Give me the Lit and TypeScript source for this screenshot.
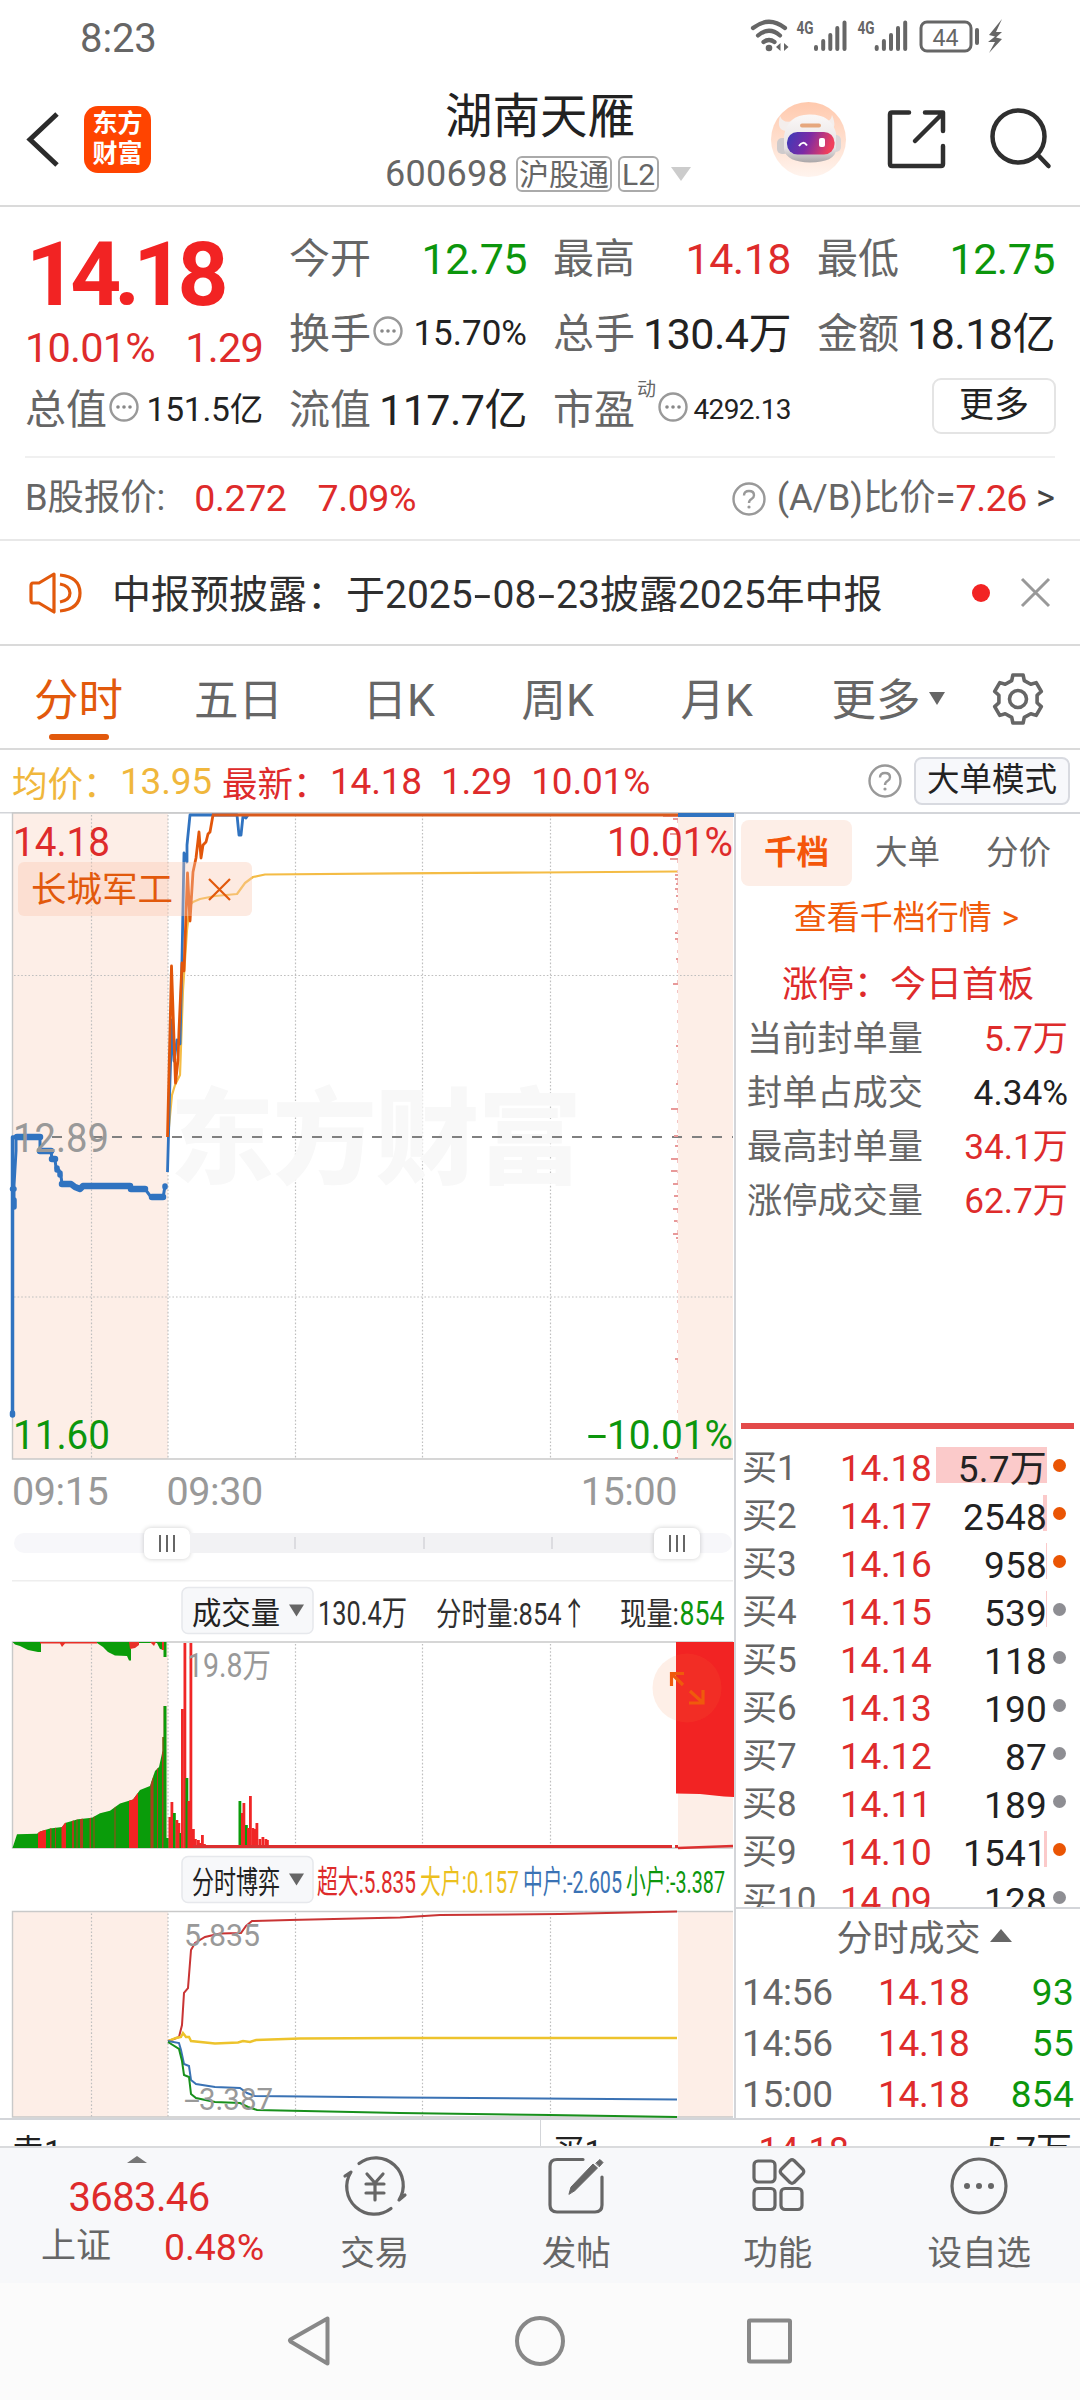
import { LitElement, html, svg, css } from "lit";
import { customElement } from "lit/decorators.js";

const RED = "#de2b2b";
const GREEN = "#0c960c";
const FONT = "Roboto, 'Noto Sans CJK SC', sans-serif";

/** SVG label stretched to an exact width. */
const label = (x: number, y: number, w: number, size: number, fill: string, text: string, weight = 400) =>
  svg`<text x=${x} y=${y} textLength=${w} lengthAdjust="spacingAndGlyphs" font-size=${size} fill=${fill} font-weight=${weight} font-family=${FONT}>${text}</text>`;

const GRID_X = [91.5, 168, 295.5, 422.5, 550.5];
const grid = (top: number, bottom: number) => svg`
  <rect x="12" y=${top} width="156" height=${bottom - top} fill="#fdeee7"/>
  <rect x="678" y=${top} width="55" height=${bottom - top} fill="#fdeee7"/>
  ${GRID_X.map((x) => svg`<line x1=${x} x2=${x} y1=${top + 2} y2=${bottom} stroke="#bfbfbf" stroke-width="1.2" stroke-dasharray="1.6 2"/>`)}
  <path d=${`M733 ${top}H12.5V${bottom}H733`} fill="none" stroke="#c9c9c9" stroke-width="1.4"/>`;

@customElement("stock-header")
class StockHeader extends LitElement {
  static styles = css`
    :host { display: block; font-family: Roboto, "Noto Sans CJK SC", sans-serif; background: #fff; }
    .status { height: 72px; display: flex; justify-content: space-between; align-items: flex-start; padding: 13px 68px 0 80px; box-sizing: border-box; }
    .clock { font-size: 40px; line-height: 52px; color: #666; letter-spacing: -0.1px; }
    .status svg { margin-top: -1px; }
    .bar { height: 133px; display: grid; grid-template-columns: 1fr auto 1fr; border-bottom: 2px solid #dadada; }
    .left { display: flex; align-items: center; padding: 1px 0 0 26px; gap: 22px; }
    .logo { width: 67px; height: 67px; border-radius: 14px; background: #ff4400; color: #fff; font-size: 25px; line-height: 30px; font-weight: 700; display: flex; flex-direction: column; justify-content: center; align-items: center; }
    .mid { display: flex; flex-direction: column; align-items: center; }
    .name { font-size: 47.5px; line-height: 60px; color: #222; padding: 15px 0 0; }
    .sub { display: flex; align-items: center; gap: 6px; margin: 8px 0 0 -4px; height: 38px; }
    .code { font-size: 36px; line-height: 38px; color: #666; letter-spacing: 0.3px; margin-right: 2px; }
    .tag { box-sizing: border-box; height: 36px; border: 2px solid #aaa; border-radius: 6px; font-size: 30px; line-height: 34px; color: #666; padding: 0 1px; }
    .tag.lv { padding: 0 2px; }
    .arrow { margin-left: 6px; border: 10px solid transparent; border-top: 14px solid #ccc; border-bottom: 0; }
    .right { display: flex; justify-content: flex-end; align-items: center; padding-right: 22px; }
    svg { display: block; }
  `;
  render() {
    const sig = (x: number) => svg`<g stroke="#666" stroke-width="4" stroke-linecap="round">
      <path d=${`M${x} 47V49M${x + 7.2} 41V49M${x + 14.3} 35V49M${x + 21.3} 28V49M${x + 28.5} 22.5V49`}/></g>`;
    return html`
      <div class="status">
        <span class="clock">8:23</span>
        <svg width="262" height="50" viewBox="750 12 262 50">
          <g fill="none" stroke="#666" stroke-width="4.2" stroke-linecap="round">
            <path d="M753 28Q769 15.500 785 28M758 35.500Q769 26 780 35.500M763.500 42Q769 38 774.500 42"/>
          </g>
          <circle cx="769" cy="48" r="3.300" fill="#666"/>
          <path d="M776 47L780.500 43V51ZM788.500 47L784 43V51Z" fill="#666"/>
          ${label(796.5, 34, 17, 18, "#666", "4G", 700)}
          ${sig(816)}
          ${label(857.5, 34, 17, 18, "#666", "4G", 700)}
          ${sig(876.7)}
          <rect x="921" y="22" width="50" height="29" rx="6" fill="none" stroke="#666" stroke-width="3"/>
          ${label(932.5, 45.500, 26, 24, "#666", "44")}
          <rect x="975" y="28" width="4" height="17" rx="2" fill="#666"/>
          <path d="M1002 19L989 35L995 36.500L988 42H995L989 53L1002 39L996 37.500L1002 32H996Z" fill="#666"/>
        </svg>
      </div>
      <div class="bar">
        <div class="left">
          <svg width="36" height="62" viewBox="26 108 36 62"><path d="M57 114L30 139.500L57 165" fill="none" stroke="#2b2b2b" stroke-width="5"/></svg>
          <div class="logo"><span>东方</span><span>财富</span></div>
        </div>
        <div class="mid">
          <div class="name">湖南天雁</div>
          <div class="sub">
            <span class="code">600698</span><span class="tag">沪股通</span><span class="tag lv">L2</span><span class="arrow"></span>
          </div>
        </div>
        <div class="right">
          <svg width="290" height="84" viewBox="768 97 290 84">
            <defs>
              <linearGradient id="peach" x1="0" y1="0" x2="0" y2="1"><stop offset="0" stop-color="#ffc9ad"/><stop offset="1" stop-color="#fff4ee"/></linearGradient>
              <linearGradient id="visor" x1="0" y1="0" x2="1" y2="0.200"><stop offset="0" stop-color="#3a3cb8"/><stop offset=".5" stop-color="#7c2aa5"/><stop offset="1" stop-color="#f0405c"/></linearGradient>
              <linearGradient id="helmet" x1="0" y1="0" x2="0" y2="1"><stop offset="0" stop-color="#fbf8f7"/><stop offset=".7" stop-color="#e6e2e3"/><stop offset="1" stop-color="#aaa6a8"/></linearGradient>
            </defs>
            <circle cx="808.500" cy="139.500" r="37.500" fill="url(#peach)"/>
            <path d="M780 116Q776 130 786 131L793 121Q783 124 780 116ZM832 115Q838 129 829 130L822 121Q831 123 832 115Z" fill="#f4eeec"/>
            <rect x="777" y="138" width="12" height="16" rx="5" fill="#cfcbcc"/><rect x="830" y="135" width="11" height="17" rx="5" fill="#dad6d7"/>
            <path d="M784 136Q787 115 809 114.500Q831 114 836 133V150Q835 162 810 162.500Q787 162 784 150Z" fill="url(#helmet)"/>
            <rect x="800" y="123.500" width="21" height="4" rx="2" fill="#e6a77d"/>
            <rect x="787" y="132" width="47.500" height="22.500" rx="10.500" fill="url(#visor)"/>
            <path d="M799 146Q803 140 807 145.500" fill="none" stroke="#fff" stroke-width="2"/>
            <rect x="819" y="138" width="6" height="9" rx="2" fill="#fff"/>
            <g fill="none" stroke="#2f2f2f" stroke-width="4.500" stroke-linecap="round" stroke-linejoin="round">
              <path d="M909 112.500H892Q890 112.500 890 114.500V164Q890 166 892 166H941Q943 166 943 164V146M925 112.500H943V131M942 114L915 141"/>
              <circle cx="1018.500" cy="136.500" r="26"/><path d="M1037.500 154.500L1048.500 166"/>
            </g>
          </svg>
        </div>
      </div>`;
  }
}

@customElement("quote-panel")
class QuotePanel extends LitElement {
  static styles = css`
    :host { display: block; font-family: Roboto, "Noto Sans CJK SC", sans-serif; background: #fff; }
    .wrap { padding: 0 25px; }
    .grid { display: grid; grid-template-columns: repeat(4, 238px); column-gap: 26px; grid-template-rows: 102px 75px 72px; height: 249px; color: #666; }
    .price { grid-row: 1 / 3; display: flex; flex-direction: column; }
    .big { font-size: 89px; line-height: 100px; font-weight: 700; color: #f22323; letter-spacing: -6.900px; margin: 18px 0 0 1px; }
    .chg { display: flex; justify-content: space-between; font-size: 41.500px; line-height: 50px; color: #de2b2b; margin-top: -2px; letter-spacing: -0.800px; }
    .cell { display: flex; align-items: center; height: 50px; align-self: end; font-size: 41px; line-height: 50px; white-space: nowrap; margin-bottom: 25px; }
    .cell.low { margin-bottom: 21px; }
    .v { margin-left: auto; font-size: 43px; color: #222; letter-spacing: -0.500px; }
    .v.s { font-size: 35px; letter-spacing: 0; }
    .v.m { font-size: 33.500px; letter-spacing: -0.200px; }
    .v.xs { font-size: 28px; letter-spacing: -0.600px; }
    .up { color: #de2b2b; } .down { color: #0c960c; }
    .sup { font-size: 19px; line-height: 20px; align-self: flex-start; margin: -5px 0 0 2px; }
    svg { display: block; flex: none; margin-left: 2px; margin-top: -7px; }
    .more { justify-self: end; align-self: end; box-sizing: border-box; width: 124px; height: 56px; border: 2px solid #e4e4e4; border-radius: 9px; color: #222; font-size: 35px; line-height: 52px; text-align: center; margin: 0 -1px 22px 0; }
    .b { display: flex; align-items: center; height: 81px; border-top: 2px solid #f0f0f0; font-size: 36.300px; line-height: 50px; color: #666; white-space: nowrap; }
    .b > span { margin-top: -1px; }
    .b .n { font-size: 37.500px; letter-spacing: -0.400px; }
    .b .n1 { margin-left: 29px; } .b .n2 { margin-left: 31px; }
    .b .q { margin: 0 11px 0 auto; }
    .b .gt { margin-left: 9px; color: #444; }
    .notice { height: 103px; border-top: 2px solid #e8e8e8; border-bottom: 2px solid #dadada; display: flex; align-items: center; padding: 0 28px; color: #2f2f2f; font-size: 39px; white-space: nowrap; }
    .notice svg { margin: 0; }
    .msg { margin-left: 30px; margin-top: -4px; }
    .dash { display: inline-block; transform: scaleX(1.600); margin: 0 4.500px; }
    .dot { width: 18px; height: 18px; border-radius: 50%; background: #f22323; margin-left: auto; margin-right: 30px; }
  `;
  render() {
    const more = html`<svg width="30" height="30" viewBox="0 0 30 30"><circle cx="15" cy="15" r="13.500" fill="none" stroke="#999" stroke-width="2.400"/><g fill="#888"><circle cx="9" cy="15" r="1.800"/><circle cx="15" cy="15" r="1.800"/><circle cx="21" cy="15" r="1.800"/></g></svg>`;
    const cell = (k: string, v: string, c = "", row = "") => html`<div class="cell ${row}"><span>${k}</span><span class="v ${c}">${v}</span></div>`;
    return html`
      <div class="wrap">
        <div class="grid">
          <div class="price"><div class="big">14.18</div><div class="chg"><span>10.01%</span><span>1.29</span></div></div>
          ${cell("今开", "12.75", "down")}${cell("最高", "14.18", "up")}${cell("最低", "12.75", "down")}
          <div class="cell"><span>换手</span>${more}<span class="v s">15.70%</span></div>
          ${cell("总手", "130.4万")}${cell("金额", "18.18亿")}
          <div class="cell low"><span>总值</span>${more}<span class="v m">151.5亿</span></div>
          ${cell("流值", "117.7亿", "", "low")}
          <div class="cell low"><span>市盈</span><span class="sup">动</span>${more}<span class="v xs">4292.13</span></div>
          <div class="more">更多</div>
        </div>
        <div class="b">
          <span>B股报价:</span><span class="n n1 up">0.272</span><span class="n n2 up">7.09%</span>
          <svg class="q" width="34" height="34" viewBox="0 0 34 34"><circle cx="17" cy="17" r="15.500" fill="none" stroke="#999" stroke-width="2.400"/><path d="M12 13.500Q12 9 17 9Q22 9 22 13.200Q22 15.500 19.500 17Q17 18.500 17 21" fill="none" stroke="#999" stroke-width="2.400"/><circle cx="17" cy="25" r="1.600" fill="#999"/></svg>
          <span>(A/B)比价=</span><span class="n up">7.26</span><span class="gt">&gt;</span>
        </div>
      </div>
      <div class="notice">
        <svg width="54" height="46" viewBox="27 569 54 46" fill="none" stroke="#e2590c" stroke-width="3.200" stroke-linejoin="round">
          <path d="M32 582Q30 582 30 585V599Q30 602 32 602H38L53 611V573L38 582Z"/><path d="M59 574Q79 576 79 592Q79 608 59 610M59 583Q69 585 69 592Q69 599 59 601"/>
        </svg>
        <span class="msg">中报预披露：于2025<span class="dash">-</span>08<span class="dash">-</span>23披露2025年中报</span>
        <span class="dot"></span>
        <svg width="32" height="32" viewBox="0 0 32 32"><path d="M2 2L29 29M29 2L2 29" stroke="#999" stroke-width="3"/></svg>
      </div>`;
  }
}

@customElement("chart-tabs")
class ChartTabs extends LitElement {
  static styles = css`
    :host { display: block; font-family: Roboto, "Noto Sans CJK SC", sans-serif; background: #fff; }
    .tabs { height: 104px; box-sizing: border-box; border-bottom: 2px solid #dadada; display: flex; align-items: flex-start; padding: 27px 35px 0 34px; font-size: 44.500px; line-height: 56px; color: #666; white-space: nowrap; }
    .t { margin-right: 71px; }
    .t.on { color: #e2590c; display: flex; flex-direction: column; align-items: center; }
    .t.on::after { content: ""; width: 60px; height: 6px; border-radius: 3px; background: #e2590c; margin-top: 5px; }
    .t.k { margin-right: 86.600px; } .t.d { margin-right: 79.500px; } .t.m { margin-right: 78.600px; }
    .t.last { margin-right: 0; display: flex; }
    .tri { border: 8px solid transparent; border-top: 13px solid #666; border-bottom: 0; margin: 19px 0 0 8px; height: 0; }
    svg { display: block; flex: none; }
    .gear { margin: -1px 0 0 auto; }
    .avg { height: 62px; display: flex; align-items: center; padding: 0 10px 0 12px; font-size: 35.500px; white-space: nowrap; color: #de2b2b; }
    .n { font-size: 37px; margin-right: 19px; letter-spacing: -0.200px; }
    .n.n0 { margin-right: 10px; }
    .y { color: #f0b73c; }
    .c { margin-right: 24px; width: 84px; }
    .q { margin-left: auto; margin-right: 12px; }
    .btn { box-sizing: border-box; width: 156px; height: 48px; background: #f7f8fb; border: 2px solid #d8dae0; border-radius: 8px; color: #222; font-size: 32.500px; line-height: 43px; text-align: center; }
  `;
  render() {
    const teeth: string[] = [];
    for (let i = 0; i < 6; i++) {
      const p = (r: number, deg: number) => {
        const a = ((i * 60 + deg - 90) * Math.PI) / 180;
        return `${(27 + r * Math.cos(a)).toFixed(1)} ${(27 + r * Math.sin(a)).toFixed(1)}`;
      };
      teeth.push(`${p(24.5, -12)} L${p(24.5, 12)} L${p(19.5, 19)} L${p(19.5, 41)}`);
    }
    return html`
      <div class="tabs">
        <span class="t on">分时</span><span class="t d">五日</span><span class="t k">日K</span><span class="t k">周K</span><span class="t m">月K</span>
        <span class="t last">更多<i class="tri"></i></span>
        <svg class="gear" width="54" height="54" viewBox="0 0 54 54"><path d=${"M" + teeth.join(" L") + "Z"} fill="none" stroke="#666" stroke-width="3.600" stroke-linejoin="round"/><circle cx="27" cy="27" r="8.500" fill="none" stroke="#666" stroke-width="3.600"/></svg>
      </div>
      <div class="avg">
        <span class="c y">均价：</span><span class="n n0 y">13.95</span>
        <span class="c">最新：</span><span class="n">14.18</span><span class="n">1.29</span><span class="n">10.01%</span>
        <svg class="q" width="34" height="34" viewBox="0 0 34 34"><circle cx="17" cy="17" r="15.500" fill="none" stroke="#999" stroke-width="2.400"/><path d="M12 13.500Q12 9 17 9Q22 9 22 13.200Q22 15.500 19.500 17Q17 18.500 17 21" fill="none" stroke="#999" stroke-width="2.400"/><circle cx="17" cy="25" r="1.600" fill="#999"/></svg>
        <span class="btn">大单模式</span>
      </div>`;
  }
}

/** Volume bars: [left, top, colour], 3px wide. */
const BARS: [number, number, string][] = [
  [166, 1838, "g"], [168.5, 1817, "r"], [170.5, 1802, "r"], [173, 1813, "g"], [175.5, 1820, "r"], [177.5, 1823, "r"], [179.5, 1833, "g"],
  [181, 1709, "r"], [183.5, 1643, "r"], [185.5, 1778, "g"], [187.5, 1801, "r"], [189.5, 1643, "r"], [192, 1829, "r"], [194, 1839, "r"], [197, 1840, "r"],
  [199, 1843, "r"], [201, 1835, "r"], [203, 1844, "r"], [206, 1845, "r"], [238.5, 1801, "g"], [241, 1813, "r"], [242.5, 1803, "r"],
  [245, 1825, "g"], [247, 1828, "r"], [249, 1796, "r"], [251.5, 1828, "r"], [254, 1829, "r"], [255.5, 1823, "r"], [258.5, 1839, "r"], [261.5, 1837, "r"], [264.5, 1839, "r"], [266, 1840, "r"],
];
const STRIPES: [number, number][] = [[38, 46], [50, 51.5], [55, 56], [61.5, 66], [72, 74], [76.500, 77.500], [80, 83], [89.500, 91], [93.500, 94.500], [114.500, 115.500], [129, 138], [150.500, 153.500], [157, 158], [162, 163.500]];
/** Trade distribution along the close: [y, length]. */
const TICKS: [number, number][] = [
  [816, 15], [819, 5], [834, 8], [859, 8], [875, 3], [879, 3], [884, 2], [889, 3], [896, 2], [909, 4], [933, 3], [939, 3], [959, 2], [984, 5], [1046, 2], [1084, 2], [1109, 7],
  [1136, 4], [1146, 3], [1159, 7], [1171, 7], [1184, 5], [1196, 4], [1209, 5], [1221, 4], [1234, 5], [1238, 2], [1359, 3], [1458, 3],
];

@customElement("chart-column")
class ChartColumn extends LitElement {
  static styles = css`
    :host { display: block; width: 734px; height: 1306px; border-right: 2px solid #d3d5d9; background: #fff; font-family: Roboto, "Noto Sans CJK SC", sans-serif; overflow: hidden; }
    svg { display: block; }
    .axis { height: 56px; padding: 6px 57px 0 12px; display: flex; font-size: 39.500px; line-height: 52px; color: #999; box-sizing: border-box; letter-spacing: -0.400px; }
    .axis .s { margin-left: 58px; } .axis .e { margin-left: auto; }
    .slider { height: 64px; padding: 17px 2px 0 14px; box-sizing: border-box; }
    .track { height: 20px; border-radius: 10px; background: #f7f7fa; display: flex; align-items: center; padding: 0 32px 0 130px; }
    .range { height: 20px; flex: 1; background: #f2f2f4; display: flex; align-items: center; padding: 0 101px 0 104px; justify-content: space-between; }
    .range i { width: 2px; height: 12px; background: #dcdce0; }
    .h { width: 46px; height: 31px; border-radius: 7px; background: #fff; box-shadow: 0 0 5px rgba(0,0,0,.2); display: flex; align-items: center; justify-content: center; gap: 5px; }
    .h b { width: 2px; height: 17px; background: #666; }
  `;
  render() {
    const btn = (y: number, text: string) => svg`
      <rect x="182" y=${y} width="131" height="46" rx="6" fill="#f7f8fa" stroke="#e6e8ec" stroke-width="1.500"/>
      ${label(192, y + 36, 88, 31, "#222", text)}
      <path d=${`M289 ${y + 17}H304L296.500 ${y + 29}Z`} fill="#666"/>`;
    return html`
      <svg width="734" height="648" viewBox="0 812 734 648">
        <path d="M0 812.700H734" stroke="#d3d5d9" stroke-width="1.400"/>
        ${grid(813, 1459)}
        <path d="M14 975.500H733M14 1297H733" stroke="#bfbfbf" stroke-width="1.200" stroke-dasharray="1.600 2"/>
        <text x="170" y="1176" textLength="412" font-size="104" font-weight="900" fill="#f8f8f8" font-family=${FONT}>东方财富</text>
        <path d="M12 1137H733" stroke="#808080" stroke-width="2" stroke-dasharray="10 10"/>
        ${TICKS.map(([y, l]) => svg`<rect x=${678 - l} y=${y - 1} width=${l} height="2" fill="#e89a9a"/>`)}
        <path d="M677.500 820V1459" stroke="#f3c4c4" stroke-width="1" stroke-dasharray="3 7"/>
        <g fill="none" stroke-linejoin="round">
          <path d="M168 1137L172 1095L175 1085L180 1075L183 990L187 930L190 905L193 902L200 899L215 896L237 894L245 883L253 877L265 874.500L400 873.300L540 872.500L677 871.500" stroke="#f4bc45" stroke-width="2.200"/>
          <path d="M12.500 1414V1137H16" stroke="#3073c0" stroke-width="3.500"/>
          <path d="M14 1207V1185L16 1151V1137H40V1151H51L52 1159H55L56 1168L59 1170L61 1176L62 1184H71L74 1187L80 1189L83 1186H116L130 1186L131 1189H145L148 1193L151 1197L163 1198L165 1186" stroke="#3073c0" stroke-width="3"/>
          <path d="M17 1137H40M40 1151H51M52 1159H55M62 1184H71L75 1187L80 1189L83 1186H130M131 1189H145M152 1197H163" stroke="#3073c0" stroke-width="6.500" stroke-linecap="round"/>
          <path d="M12.500 1189H14M14 1200V1207M12.500 1413V1415M57 1168V1170M60 1173V1175M165 1186V1187" stroke="#3073c0" stroke-width="5.500" stroke-linecap="round"/>
          <path d="M167.500 1172L170 1080L172 1020L174 1061L177 1040L180 1044L182 960L184 853L187 862V845L190 815H237L239 835H241L243 816L246 818L248 815" stroke="#3073c0" stroke-width="2.800"/>
          <path d="M167.500 1137L171.500 966L175.500 1083L178 1060L179 1030L182 963L184 971L187.500 873L190 921L193 872L196 858L199 832L201 858L203 845L206 842L208 834L210 832L213 815" stroke="#e2560a" stroke-width="2.800"/>
          <path d="M212 815H678" stroke="#d95a1c" stroke-width="3"/>
          <path d="M678 815H734" stroke="#3073c0" stroke-width="4"/>
        </g>
        <rect x="18" y="862" width="234" height="54" rx="6" fill="#f9c8b0" fill-opacity=".38"/>
        ${label(31, 902, 142, 35, "#e2590c", "长城军工")}
        <path d="M209 879L230 900M230 879L209 900" stroke="#e2590c" stroke-width="2.200"/>
        ${label(13, 856, 97, 40, RED, "14.18")}
        ${label(607, 856, 126, 40, RED, "10.01%")}
        ${label(13, 1152, 96, 40, "#999", "12.89")}
        ${label(13, 1449, 97, 40, GREEN, "11.60")}
        ${label(587, 1449, 20, 40, GREEN, "-")}${label(607, 1449, 126, 40, GREEN, "10.01%")}
      </svg>
      <div class="axis"><span>09:15</span><span class="s">09:30</span><span class="e">15:00</span></div>
      <div class="slider"><div class="track">
        <span class="h"><b></b><b></b><b></b></span>
        <span class="range"><i></i><i></i><i></i></span>
        <span class="h"><b></b><b></b><b></b></span>
      </div></div>
      <svg width="734" height="538" viewBox="0 1580 734 538">
        <path d="M12 1580.500H733" stroke="#eee" stroke-width="2"/>
        ${btn(1587.500, "成交量")}
        ${label(318, 1625, 89, 34, "#2f2f2f", "130.4万")}
        ${label(436, 1625, 151, 32, "#2f2f2f", "分时量:854↑")}
        ${label(620, 1625, 59, 32, "#2f2f2f", "现量:")}
        ${label(679.5, 1625, 45, 34, GREEN, "854")}
        ${grid(1642, 1848)}
        <clipPath id="pre"><path d="M12.500 1848L17 1834.300L37 1833.700L40 1831.500L50 1828.500L62 1827L65 1823L78 1819.300L92 1817.700L100 1813.300L110 1810.700L120 1803.500L133 1799.500L140 1790L150 1786L155 1771L159 1767L162.500 1751V1737H163.500V1706H166.500V1848Z"/></clipPath>
        <g clip-path="url(#pre)"><rect x="12" y="1700" width="156" height="148" fill="#0a9c0a"/>
          ${STRIPES.map(([a, b]) => svg`<rect x=${a} y="1700" width=${b - a} height="148" fill=${b - a > 4 ? "#f22323" : "#a8401c"}/>`)}</g>
        <path d="M12.500 1642L15 1644.500L20 1646L28 1650L38 1652H41V1643H97L103 1647L108 1652L115 1655.500L127 1656L129 1660.500H131V1643H157L160 1649L163.500 1650V1657H166.500V1642Z" fill="#0a9c0a"/>
        <path d="M40 1642H97V1643.500H65L62 1647L60 1643.500H40ZM129 1642H139V1645L135 1648L130 1649ZM150 1642H156L154 1646ZM162 1642H164V1650H162Z" fill="#e83028"/>
        ${BARS.map(([x, y, c]) => svg`<rect x=${x} y=${y} width="2.800" height=${1848 - y} fill=${c === "r" ? "#f02626" : "#0a9c0a"}/>`)}
        <path d="M193 1846.500H672M675 1846.500H678" stroke="#dc3030" stroke-width="3"/>
        <path d="M678 1848L733 1846" stroke="#dc3030" stroke-width="2.500"/>
        <path d="M676 1642H734V1797L724 1796.500L700 1794L676 1793.500Z" fill="#f22323"/>
        <circle cx="687" cy="1688" r="34.500" fill="#f97b3c" fill-opacity=".12"/>
        <path d="M671.500 1686V1673.500H684M672 1674L683 1685M703 1690V1703H689M702 1702L690 1691" fill="none" stroke="#ef5a0c" stroke-width="3.200"/>
        ${label(187, 1677, 84, 33, "#999", "19.8万")}
        ${btn(1856.5, "分时博弈")}
        ${label(317, 1893, 99, 32, RED, "超大:5.835")}
        ${label(420, 1893, 99, 32, "#ecc01e", "大户:0.157")}
        ${label(523, 1893, 99, 32, "#3a72b4", "中户:-2.605")}
        ${label(626, 1893, 99, 32, GREEN, "小户:-3.387")}
        ${grid(1911.500, 2117)}
        <g fill="none" stroke-width="2">
          <path d="M168 2041L174 2039L179 2037L182 2025L184 1993L188 1988L191 1950L195 1943L205 1937L220 1933.500L241 1933L246 1926L252 1921L290 1920L400 1917.500L440 1915L560 1914L677 1911.500" stroke="#c93434"/>
          <path d="M168 2041L176 2038L181 2037L183 2033L186 2037H189L191 2041L215 2043.500L238 2042.500L243 2041L250 2042L256 2040L300 2038.500L400 2038H677" stroke="#edc32c" stroke-width="2.400"/>
          <path d="M168 2041L179 2043L181 2050L184 2064L189 2066L191 2080L196 2084L215 2087L240 2088L247 2093L255 2096L400 2097.500L677 2099.500" stroke="#3a72b4"/>
          <path d="M168 2042L179 2049L182 2061L184 2075L189 2077L191 2094L196 2098L215 2102L240 2103L248 2107L257 2110L400 2113L550 2115L677 2117" stroke="#18901c"/>
        </g>
        ${label(184, 1945.500, 76, 32, "#999", "5.835")}
        ${label(184, 2110, 16, 32, "#999", "-")}${label(199, 2110, 74, 32, "#999", "3.387")}
      </svg>`;
  }
}

@customElement("order-column")
class OrderColumn extends LitElement {
  static styles = css`
    :host { display: block; width: 344px; height: 1306px; box-sizing: border-box; border-top: 2px solid #d3d5d9; background: #fff; color: #666; font-family: Roboto, "Noto Sans CJK SC", sans-serif; }
    .tabs { display: flex; padding: 6px 0 0 5px; font-size: 32.500px; line-height: 67px; }
    .tabs span { width: 111px; height: 66px; text-align: center; }
    .tabs .on { background: #fdeee7; border-radius: 8px; color: #f4560a; font-weight: 700; }
    .link { text-align: center; color: #f05a0a; font-size: 33px; line-height: 50px; margin: 7px 3px 0 0; }
    .link i { font-style: normal; margin-left: 10px; }
    .limit { text-align: center; color: #de2b2b; font-size: 36px; line-height: 50px; margin: 17px 0 0 0; white-space: nowrap; }
    .stat { display: flex; justify-content: space-between; padding: 0 12px 0 11px; font-size: 35.200px; line-height: 54px; }
    .stat b { font-weight: 400; color: #de2b2b; }
    .stat b.k { color: #222; }
    .stats { margin-top: 2px; height: 411px; border-bottom: 6px solid #e34a4a; width: 333px; margin-left: 5px; }
    .stats .stat { margin-left: -5px; width: 344px; box-sizing: border-box; }
    .book { height: 480px; overflow: hidden; padding-top: 15px; box-sizing: border-box; border-bottom: 2px solid #d3d5d9; }
    .row { display: grid; grid-template-columns: 98px 96px 1fr 6px 14px; padding: 0 13px 0 6px; height: 48px; line-height: 49px; font-size: 35px; align-items: center; white-space: nowrap; }
    .row .p { color: #de2b2b; font-size: 37px; letter-spacing: -0.300px; }
    .row .q { color: #222; font-size: 37px; text-align: right; grid-column: 3; position: relative; letter-spacing: 0.200px; height: 48px; }
    .row .q i { position: absolute; right: 0; top: 2px; height: 36px; background: #fbcaca; }
    .row .q span { position: relative; }
    .row .dot { grid-column: 5; width: 13px; height: 13px; border-radius: 50%; background: #8e8e93; margin-top: -6px; }
    .row .dot.hot { background: #ea5504; }
    .deal { display: flex; justify-content: center; align-items: center; gap: 9px; font-size: 36px; line-height: 50px; padding: 5px 0 3px 32px; }
    .tri { border: 11px solid transparent; border-bottom: 13px solid #666; border-top: 0; margin-top: -8px; }
    .trade { display: grid; grid-template-columns: 136px 90px 1fr; padding: 0 6px; font-size: 37px; height: 51px; line-height: 51px; letter-spacing: -0.300px; }
    .trade .p { color: #de2b2b; } .trade .g { color: #0c960c; text-align: right; letter-spacing: 0.300px; }
  `;
  render() {
    const book: [string, string, number, boolean][] = [
      ["14.18", "5.7万", 111, true], ["14.17", "2548", 4, true], ["14.16", "958", 1, true], ["14.15", "539", 1, false], ["14.14", "118", 0, false],
      ["14.13", "190", 0, false], ["14.12", "87", 0, false], ["14.11", "189", 0, false], ["14.10", "1541", 3, true], ["14.09", "128", 0, false],
    ];
    return html`
      <div class="tabs"><span class="on">千档</span><span>大单</span><span>分价</span></div>
      <div class="link">查看千档行情<i>&gt;</i></div>
      <div class="limit">涨停：今日首板</div>
      <div class="stats">
        <div class="stat"><span>当前封单量</span><b>5.7万</b></div>
        <div class="stat"><span>封单占成交</span><b class="k">4.34%</b></div>
        <div class="stat"><span>最高封单量</span><b>34.1万</b></div>
        <div class="stat"><span>涨停成交量</span><b>62.7万</b></div>
      </div>
      <div class="book">${book.map(([p, q, w, hot], i) => html`
        <div class="row"><span>买${i + 1}</span><span class="p">${p}</span><span class="q"><i style="width:${w}px"></i><span>${q}</span></span><span class="dot ${hot ? "hot" : ""}"></span></div>`)}
      </div>
      <div class="deal">分时成交<i class="tri"></i></div>
      ${[["14:56", "93"], ["14:56", "55"], ["15:00", "854"]].map(([t, v]) => html`
        <div class="trade"><span>${t}</span><span class="p">14.18</span><span class="g">${v}</span></div>`)}`;
  }
}

@customElement("bottom-bar")
class BottomBar extends LitElement {
  static styles = css`
    :host { display: block; font-family: Roboto, "Noto Sans CJK SC", sans-serif; color: #666; }
    .five { height: 28px; overflow: hidden; border-top: 2px solid #d3d5d9; box-sizing: border-box; display: flex; background: #fff; color: #222; font-size: 32px; line-height: 50px; }
    .half { flex: 1; display: flex; padding: 6px 8px 0 12px; }
    .half + .half { border-left: 1px solid #d3d5d9; }
    .half .p { color: #de2b2b; margin-left: auto; font-size: 36px; }
    .half .v { margin-left: 137px; font-size: 36px; }
    .bar { height: 137px; border-top: 2px solid #dadbdd; box-sizing: border-box; background: #f7f8fa; display: flex; }
    .index { width: 274px; display: flex; flex-direction: column; align-items: center; }
    .tri { border: 10px solid transparent; border-bottom: 7px solid #777; border-top: 0; margin-top: 8px; }
    .num { font-size: 40px; line-height: 48px; color: #de2b2b; letter-spacing: -0.600px; margin: 11px 0 0 4px; }
    .line { display: flex; gap: 53px; font-size: 35px; line-height: 48px; margin: 1px 0 0 33px; align-self: flex-start; padding-left: 8px; }
    .line b { font-weight: 400; color: #de2b2b; font-size: 37.500px; letter-spacing: -0.100px; }
    .item { width: 201.500px; display: flex; flex-direction: column; align-items: center; font-size: 34.500px; line-height: 46px; }
    .item svg { margin: 7px 0 13px; }
    svg { display: block; }
    .nav { height: 117px; background: #fbfbfb; display: flex; justify-content: center; align-items: flex-start; padding: 30px 0 0 0; box-sizing: border-box; }
  `;
  render() {
    const item = (name: string, icon: unknown) => html`<div class="item"><svg width="66" height="62" viewBox="0 0 66 62" fill="none" stroke="#666" stroke-width="3.200" stroke-linecap="round" stroke-linejoin="round">${icon}</svg>${name}</div>`;
    return html`
      <div class="five">
        <div class="half"><span>卖1</span></div>
        <div class="half"><span>买1</span><span class="p">14.18</span><span class="v">5.7万</span></div>
      </div>
      <div class="bar">
        <div class="index">
          <i class="tri"></i><div class="num">3683.46</div>
          <div class="line"><span>上证</span><b>0.48%</b></div>
        </div>
        ${item("交易", svg`<path d="M17 8.500A27.500 27.500 0 0 1 57 45L63 40M49 53.500A27.500 27.500 0 0 1 9 17L3 21M25 19L33 28L41 19M33 28V45M24 29H42M24 38H42"/>`)}
        ${item("发帖", svg`<path d="M40 4.500H14Q7 4.500 7 11.500V50Q7 57 14 57H52Q59 57 59 50V22"/><path d="M26 39L28 32L50 9L54.500 13L32 35.500Z" fill="#666" stroke-width="1"/><path d="M53 8L57 4.500L60 7.500L56.500 11.500Z" fill="#666" stroke-width="1"/>`)}
        ${item("功能", svg`<rect x="9" y="6" width="21" height="21" rx="4"/><rect x="9" y="33.500" width="21" height="21" rx="4"/><rect x="36" y="33.500" width="21" height="21" rx="4"/><path d="M45 5.500Q47 4 49 5.500L58 14.500Q59.500 16.500 58 18.500L49 27.500Q47 29 45 27.500L36 18.500Q34.500 16.500 36 14.500Z"/>`)}
        ${item("设自选", svg`<circle cx="33" cy="31" r="27"/><g fill="#666" stroke="none"><circle cx="21" cy="31" r="3"/><circle cx="33" cy="31" r="3"/><circle cx="45" cy="31" r="3"/></g>`)}
      </div>
      <div class="nav">
        <svg width="510" height="56" viewBox="285 2313 510 56" fill="none" stroke="#888" stroke-width="4" stroke-linejoin="round">
          <path d="M327.500 2318.500V2363.500L290.500 2341.500Q289.500 2340.500 290.500 2339.500Z"/><circle cx="540" cy="2341" r="23"/><rect x="749" y="2320.500" width="41" height="41" rx="1"/>
        </svg>
      </div>`;
  }
}

@customElement("app-root")
class AppRoot extends LitElement {
  static styles = css`
    :host { display: block; width: 1080px; height: 2400px; overflow: hidden; background: #fff; }
    .body { display: flex; height: 1306px; }
  `;
  render() {
    return html`
      <stock-header></stock-header>
      <quote-panel></quote-panel>
      <chart-tabs></chart-tabs>
      <div class="body"><chart-column></chart-column><order-column></order-column></div>
      <bottom-bar></bottom-bar>`;
  }
}
